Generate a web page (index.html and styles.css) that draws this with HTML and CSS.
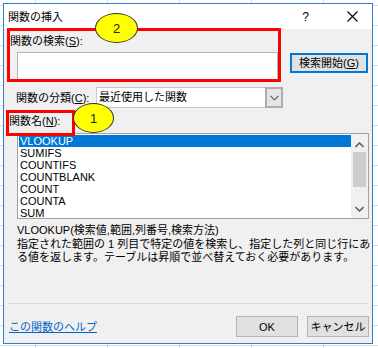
FILE: index.html
```html
<!DOCTYPE html>
<html lang="ja">
<head>
  <meta charset="UTF-8" />
  <title>関数の挿入</title>
  <link rel="stylesheet" href="styles.css">
</head>
<body>
  <div class="dialog">
    <div class="title-bar">
      <div class="title">関数の挿入</div>
      <div class="title-help">?</div>
      <div class="title-close">
        <svg width="11" height="11" viewBox="0 0 11 11"><path d="M0.5 0.5L10.5 10.5M10.5 0.5L0.5 10.5" stroke="#000" stroke-width="1.1" fill="none"/></svg>
      </div>
    </div>

    <div class="content">
      <div class="label search-label">関数の検索(<u>S</u>):</div>
      <div class="search-row">
        <div class="search-input"></div>
        <div class="btn btn-default">検索開始(<u>G</u>)</div>
      </div>

      <div class="cat-row">
        <div class="label cat-label">関数の分類(<u>C</u>):</div>
        <div class="select">
          <div class="select-text">最近使用した関数</div>
          <div class="select-btn">
            <svg width="9" height="6" viewBox="0 0 9 6"><path d="M0.5 0.8L4.5 4.8L8.5 0.8" stroke="#555" stroke-width="1.1" fill="none"/></svg>
          </div>
        </div>
      </div>

      <div class="label name-label">関数名(<u>N</u>):</div>
      <div class="func-list">
        <div class="items">
          <div class="item selected">VLOOKUP</div>
          <div class="item">SUMIFS</div>
          <div class="item">COUNTIFS</div>
          <div class="item">COUNTBLANK</div>
          <div class="item">COUNT</div>
          <div class="item">COUNTA</div>
          <div class="item">SUM</div>
        </div>
        <div class="scrollbar">
          <svg class="arrow" width="9" height="6" viewBox="0 0 9 6"><path d="M0.5 5L4.5 1L8.5 5" stroke="#606060" stroke-width="1.6" fill="none"/></svg>
          <div class="thumb"></div>
          <svg class="arrow arrow-down" width="9" height="6" viewBox="0 0 9 6"><path d="M0.5 1L4.5 5L8.5 1" stroke="#606060" stroke-width="1.6" fill="none"/></svg>
        </div>
      </div>

      <div class="syntax">VLOOKUP(検索値,範囲,列番号,検索方法)</div>
      <div class="desc">
        <div>指定された範囲の 1 列目で特定の値を検索し、指定した列と同じ行にあ</div>
        <div>る値を返します。テーブルは昇順で並べ替えておく必要があります。</div>
      </div>

      <div class="separator"></div>

      <div class="bottom-row">
        <a class="help-link" href="#">この関数のヘルプ</a>
        <div class="buttons">
          <div class="btn">OK</div>
          <div class="btn">キャンセル</div>
        </div>
      </div>
    </div>

    <!-- 注釈 -->
    <div class="mark mark-search"></div>
    <div class="mark mark-name"></div>
    <div class="bubble bubble-2">2</div>
    <div class="bubble bubble-1">1</div>
  </div>
</body>
</html>
```

FILE: styles.css
```css
* { box-sizing: border-box; }
body {
  margin: 0;
  width: 378px;
  height: 348px;
  overflow: hidden;
  font-family: "Liberation Sans", "Noto Sans CJK JP", sans-serif;
  font-size: 11px;
  color: #000;
  background-color: #fff;
  background-image:
    linear-gradient(to right, #dcdcdc 1px, transparent 1px),
    linear-gradient(to bottom, #dcdcdc 1px, transparent 1px);
  background-size: 72px 100%, 100% 20px;
  background-position: 35px 0, 0 5px;
}
u { text-decoration: underline; text-underline-offset: 1px; }

.dialog {
  position: relative;
  margin: 3px 0 0 3px;
  width: 370px;
  height: 341px;
  border: 1px solid #2a7fd4;
  background: #f0f0f0;
  display: flex;
  flex-direction: column;
}

.title-bar {
  height: 25px;
  background: #fff;
  display: flex;
  align-items: center;
}
.title {
  padding-left: 4px;
  font-size: 11px;
  line-height: 14px;
  flex: 1;
}
.title-help {
  font-size: 12px;
  margin-right: 38px;
}
.title-close {
  width: 11px;
  margin-right: 14px;
  display: flex;
}

.content {
  flex: 1;
  display: flex;
  flex-direction: column;
}

.label {
  line-height: 14px;
  height: 14px;
  white-space: nowrap;
}
.search-label {
  margin-top: 5px;
  padding-left: 6px;
}

.search-row {
  margin-top: 4px;
  display: flex;
  align-items: flex-start;
}
.search-input {
  margin-left: 13px;
  width: 261px;
  height: 28px;
  background: #fff;
  border: 1px solid #b4b4b4;
}

.btn {
  height: 20px;
  background: #e1e1e1;
  border: 1px solid #adadad;
  display: flex;
  align-items: center;
  justify-content: center;
  white-space: nowrap;
  line-height: 14px;
}
.btn-default {
  margin-left: 12px;
  margin-top: 1px;
  width: 78px;
  border: 2px solid #0078d7;
}

.cat-row {
  margin-top: 7px;
  height: 21px;
  display: flex;
  align-items: center;
}
.cat-label {
  padding-left: 12px;
  width: 92px;
}
.select {
  width: 187px;
  height: 21px;
  display: flex;
  background: #fff;
  border: 1px solid #c8c8c8;
  border-right: none;
}
.select-text {
  flex: 1;
  padding-left: 2px;
  line-height: 19px;
}
.select-btn {
  width: 18px;
  margin: -1px 0;
  background: #e5e5e5;
  border: 2px solid #adadad;
  display: flex;
  align-items: center;
  justify-content: center;
}

.name-label {
  margin-top: 6px;
  padding-left: 5px;
}

.func-list {
  margin: 5px 0 0 13px;
  width: 352px;
  height: 86px;
  background: #fff;
  border: 1px solid #a0a0a0;
  display: flex;
}
.items {
  flex: 1;
  padding: 1px 0 0 1px;
}
.item {
  height: 12px;
  line-height: 12px;
  padding-left: 1px;
}
.item.selected {
  background: #0078d7;
  color: #fff;
}
.scrollbar {
  width: 17px;
  background: #f0f0f0;
  display: flex;
  flex-direction: column;
  align-items: center;
}
.arrow { margin-top: 8px; }
.thumb {
  margin-top: 4px;
  width: 13px;
  height: 35px;
  background: #cdcdcd;
}
.arrow-down { margin-top: auto; margin-bottom: 6px; }

.syntax {
  margin: 5px 0 0 13px;
  line-height: 13px;
  white-space: nowrap;
}
.desc {
  margin: 1px 0 0 13px;
  line-height: 13px;
  white-space: nowrap;
}

.separator {
  margin: 39px 4px 0 5px;
  height: 1px;
  background: #d8d8d8;
}

.bottom-row {
  margin-top: 12px;
  padding: 0 3px 0 5px;
  display: flex;
  align-items: center;
  justify-content: space-between;
}
.help-link {
  color: #0066cc;
  text-decoration: underline;
  line-height: 14px;
}
.buttons {
  display: flex;
  gap: 9px;
}
.buttons .btn { width: 62px; height: 21px; border-color: #b4b4b4; }

/* 注釈の枠と番号 */
.mark {
  position: absolute;
  border: 3px solid #ff0000;
}
.mark-search { left: 3px; top: 24px; width: 274px; height: 54px; }
.mark-name { left: 2px; top: 106px; width: 69px; height: 26px; }

.bubble {
  position: absolute;
  background: #ffff00;
  border: 1px solid #333;
  border-radius: 50%;
  display: flex;
  align-items: center;
  justify-content: center;
  font-size: 13px;
  color: #222;
}
.bubble-2 { left: 91px; top: 9px; width: 43px; height: 30px; }
.bubble-1 { left: 69px; top: 99px; width: 41px; height: 30px; }
```
